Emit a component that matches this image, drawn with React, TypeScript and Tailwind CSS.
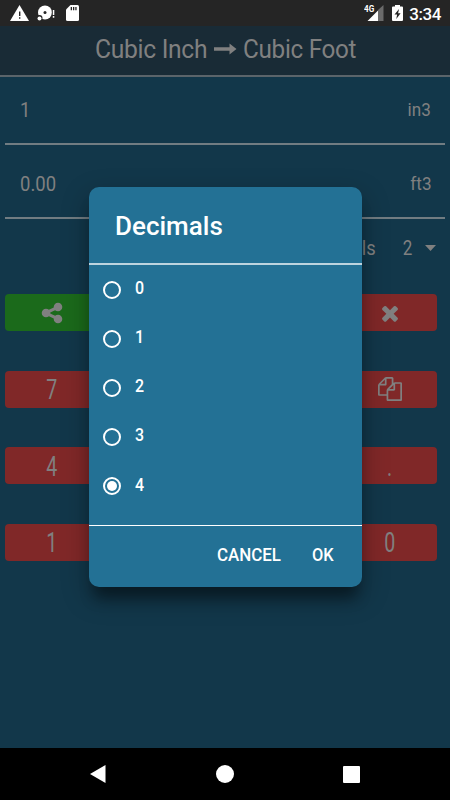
import clsx from "clsx";

const DECIMALS = ["0", "1", "2", "3", "4"];
const SELECTED = "4";

// the two middle columns sit behind the dialog
const KEYS = [
  ["share", "", "", "clear"],
  ["7", "", "", "copy"],
  ["4", "", "", "."],
  ["1", "", "", "0"],
];

const ICONS: Record<string, string> = {
  share:
    "M1344 1024q133 0 226.500 93.500t93.500 226.500-93.500 226.500-226.500 93.500-226.500-93.500-93.500-226.500q0-12 2-34l-360-180q-92 86-218 86-133 0-226.500-93.500t-93.500-226.500 93.500-226.500 226.500-93.500q126 0 218 86l360-180q-2-22-2-34 0-133 93.500-226.500t226.500-93.500 226.500 93.500 93.500 226.500-93.500 226.500-226.500 93.500q-126 0-218-86l-360 180q2 22 2 34t-2 34l360 180q92-86 218-86z",
  clear:
    "M1490 1322q0 40-28 68l-136 136q-28 28-68 28t-68-28l-294-294-294 294q-28 28-68 28t-68-28l-136-136q-28-28-28-68t28-68l294-294-294-294q-28-28-28-68t28-68l136-136q28-28 68-28t68 28l294 294 294-294q28-28 68-28t68 28l136 136q28 28 28 68t-28 68l-294 294 294 294q28 28 28 68z",
  copy: "M1696 384q40 0 68 28t28 68v1216q0 40-28 68t-68 28h-960q-40 0-68-28t-28-68v-288h-544q-40 0-68-28t-28-68v-672q0-40 20-88t48-76l408-408q28-28 76-48t88-20h416q40 0 68 28t28 68v328q68-40 128-40h416zm-544 213l-299 299h299v-299zm-640-384l-299 299h299v-299zm196 647l316-316v-416h-384v416q0 40-28 68t-68 28h-416v640h512v-256q0-40 20-88t48-76zm956 804v-1152h-384v416q0 40-28 68t-68 28h-416v640h896z",
};

function StatusBar() {
  return (
    <div className="flex h-[26px] items-center bg-[#252525] text-white">
      <svg className="ml-[10px] h-[18px] w-[72px]" viewBox="0 0 72 18">
        <path d="M9.500 1 19 17H0Z" fill="#fff" />
        <path d="M9 7.500h1.400v4.500H9zM9 13.200h1.400v1.500H9z" fill="#252525" />
        <circle cx="35" cy="8.500" r="7" fill="#fff" />
        <circle cx="35" cy="8.500" r="1.500" fill="#252525" />
        <circle cx="29.500" cy="14" r="3" fill="#252525" />
        <circle cx="29.500" cy="14.500" r="2" fill="#fff" />
        <path d="M41.800 5h3.500v10h-3.500z" fill="#252525" />
        <path d="M42.800 6h1.500v5h-1.500zM42.800 12h1.500v1.800h-1.500z" fill="#fff" />
        <path d="M60.500 1H67.500q1.500 0 1.500 1.500v13q0 1.500-1.500 1.500h-10q-1.500 0-1.500-1.500V5.500z" fill="#fff" />
        <path d="M60.700 3h1.300v3.300h-1.300zM63 3h1.300v3.300H63zM65.300 3h1.300v3.300h-1.300z" fill="#252525" />
      </svg>
      <div className="ml-auto flex items-center pr-[9px]">
        <span className="relative h-[18px] w-[20px]">
          <span className="absolute top-[1px] left-0 origin-left scale-x-[0.9] text-[9px] leading-[9px] font-bold">4G</span>
          <svg className="h-[18px] w-[20px]" viewBox="0 0 20 18">
            <path d="M14 6 19.500 1V17H14z" fill="#6b6b6b" />
            <path d="M14 6.500V17H3.500z" fill="#fff" />
          </svg>
        </span>
        <svg className="ml-[8px] h-[18px] w-[11px]" viewBox="0 0 11 18">
          <path d="M3 1h5v1.500h2q1 0 1 1V16q0 1-1 1H1q-1 0-1-1V3.500q0-1 1-1h2z" fill="#fff" />
          <path d="M7 5 2.500 10.500h2.600L4.300 15l4.300-5.800H6.100z" fill="#252525" />
        </svg>
        <span className="ml-[6px] pt-[1px] text-[17px] leading-[24px] font-medium tracking-[-0.4px]">3:34</span>
      </div>
    </div>
  );
}

function Header() {
  return (
    <header className="flex h-[51px] items-center border-b-2 border-[#5b646a] bg-[#192b36] pb-[1px] pl-[95px] text-[25px] text-[#808080]">
      <span className="w-[119px] origin-left scale-x-[0.985] tracking-[-0.3px] whitespace-nowrap">Cubic Inch</span>
      <svg className="mb-[2px] h-[12px] w-[23px]" viewBox="0 0 23 12">
        <path d="M0 4.300h15.500V.5L22.500 6 15.500 11.500V7.700H0z" fill="#808080" />
      </svg>
      <span className="ml-[6px] origin-left scale-x-[0.97] tracking-[-0.3px] whitespace-nowrap">Cubic Foot</span>
    </header>
  );
}

function ValueRow({ value, unit }: { value: string; unit: string }) {
  return (
    <div className="mx-[5px] flex justify-between border-b-2 border-[#717c82] pr-[14px] pl-[15px] text-[#808080]">
      <span className="origin-left scale-x-[0.88] pt-[1px] text-[21px]">{value}</span>
      <span className="origin-right scale-x-[0.9] text-[19px]">{unit}</span>
    </div>
  );
}

function Key({ name }: { name: string }) {
  return (
    <div
      className={clsx(
        "flex h-[37px] items-center justify-center rounded-[4px] text-[28px] text-[#808080]",
        name === "share" ? "bg-[#1b6a1b]" : "bg-[#802828]",
      )}
    >
      {ICONS[name] ? (
        <svg className="size-[24px]" viewBox="0 0 1792 1792" fill="currentColor">
          <path d={ICONS[name]} />
        </svg>
      ) : (
        <span className="scale-x-[0.7] pt-[2px]">{name}</span>
      )}
    </div>
  );
}

function DecimalsDialog() {
  return (
    <div className="absolute top-[187px] left-[89px] flex h-[400px] w-[273px] flex-col rounded-[10px] bg-[#237195] text-white shadow-[0_16px_14px_-5px_rgba(0,0,0,0.38),0_10px_26px_2px_rgba(0,0,0,0.25)]">
      <h2 className="h-[78px] border-b-2 border-[#bdd4df] pl-[26px] text-[26px] leading-[78px] font-medium">Decimals</h2>
      <ul className="flex h-[260px] flex-col">
        {DECIMALS.map((d) => (
          <li key={d} className="flex h-[49.200px] items-center pl-[14px]">
            <span className="flex size-[18px] items-center justify-center rounded-full border-2 border-white">
              {d === SELECTED && <span className="size-[10px] rounded-full bg-white" />}
            </span>
            <span className="ml-[14px] origin-left scale-x-[0.84] pb-[3px] text-[19px] font-medium">{d}</span>
          </li>
        ))}
      </ul>
      <div className="flex h-[62px] items-center border-t border-white pb-[3px] text-[18px] leading-[24px] font-medium">
        <span className="ml-[128px] w-[95px]">
          <span className="inline-block origin-left scale-x-[0.94]">CANCEL</span>
        </span>
        <span className="origin-left scale-x-[0.91]">OK</span>
      </div>
    </div>
  );
}

export default function App() {
  return (
    <div className="relative flex h-[800px] w-[450px] flex-col overflow-hidden bg-[#12374a] font-[Roboto,sans-serif]">
      <StatusBar />
      <Header />
      <div className="flex h-[68px] flex-col leading-[65px]">
        <ValueRow value="1" unit="in3" />
      </div>
      <div className="flex h-[74px] flex-col pt-[6px] leading-[65px]">
        <ValueRow value="0.00" unit="ft3" />
      </div>
      <div className="flex h-[58px] items-center justify-end pr-[14px] text-[20px] text-[#808080]">
        <span className="origin-right scale-x-[0.92]">Decimals</span>
        <span className="ml-[26px] scale-x-[0.85]">2</span>
        <svg className="ml-[12px] h-[6px] w-[11px]" viewBox="0 0 11 6">
          <path d="M0 0h11L5.500 6z" fill="#808080" />
        </svg>
      </div>
      <div className="mt-[17px] ml-[5px] flex w-[432px] flex-col gap-[39.600px]">
        {KEYS.map((row, i) => (
          <div key={i} className="grid grid-cols-4 gap-[18.700px]">
            {row.map((name, j) => (
              <Key key={j} name={name} />
            ))}
          </div>
        ))}
      </div>
      <nav className="mt-auto flex h-[52px] items-center justify-between bg-black px-[90px]">
        <svg className="h-[18px] w-[16px]" viewBox="0 0 16 18">
          <path d="M15.500 0v18L0 9z" fill="#fff" />
        </svg>
        <span className="size-[18px] rounded-full bg-white" />
        <span className="size-[17px] rounded-[1px] bg-white" />
      </nav>
      <DecimalsDialog />
    </div>
  );
}
